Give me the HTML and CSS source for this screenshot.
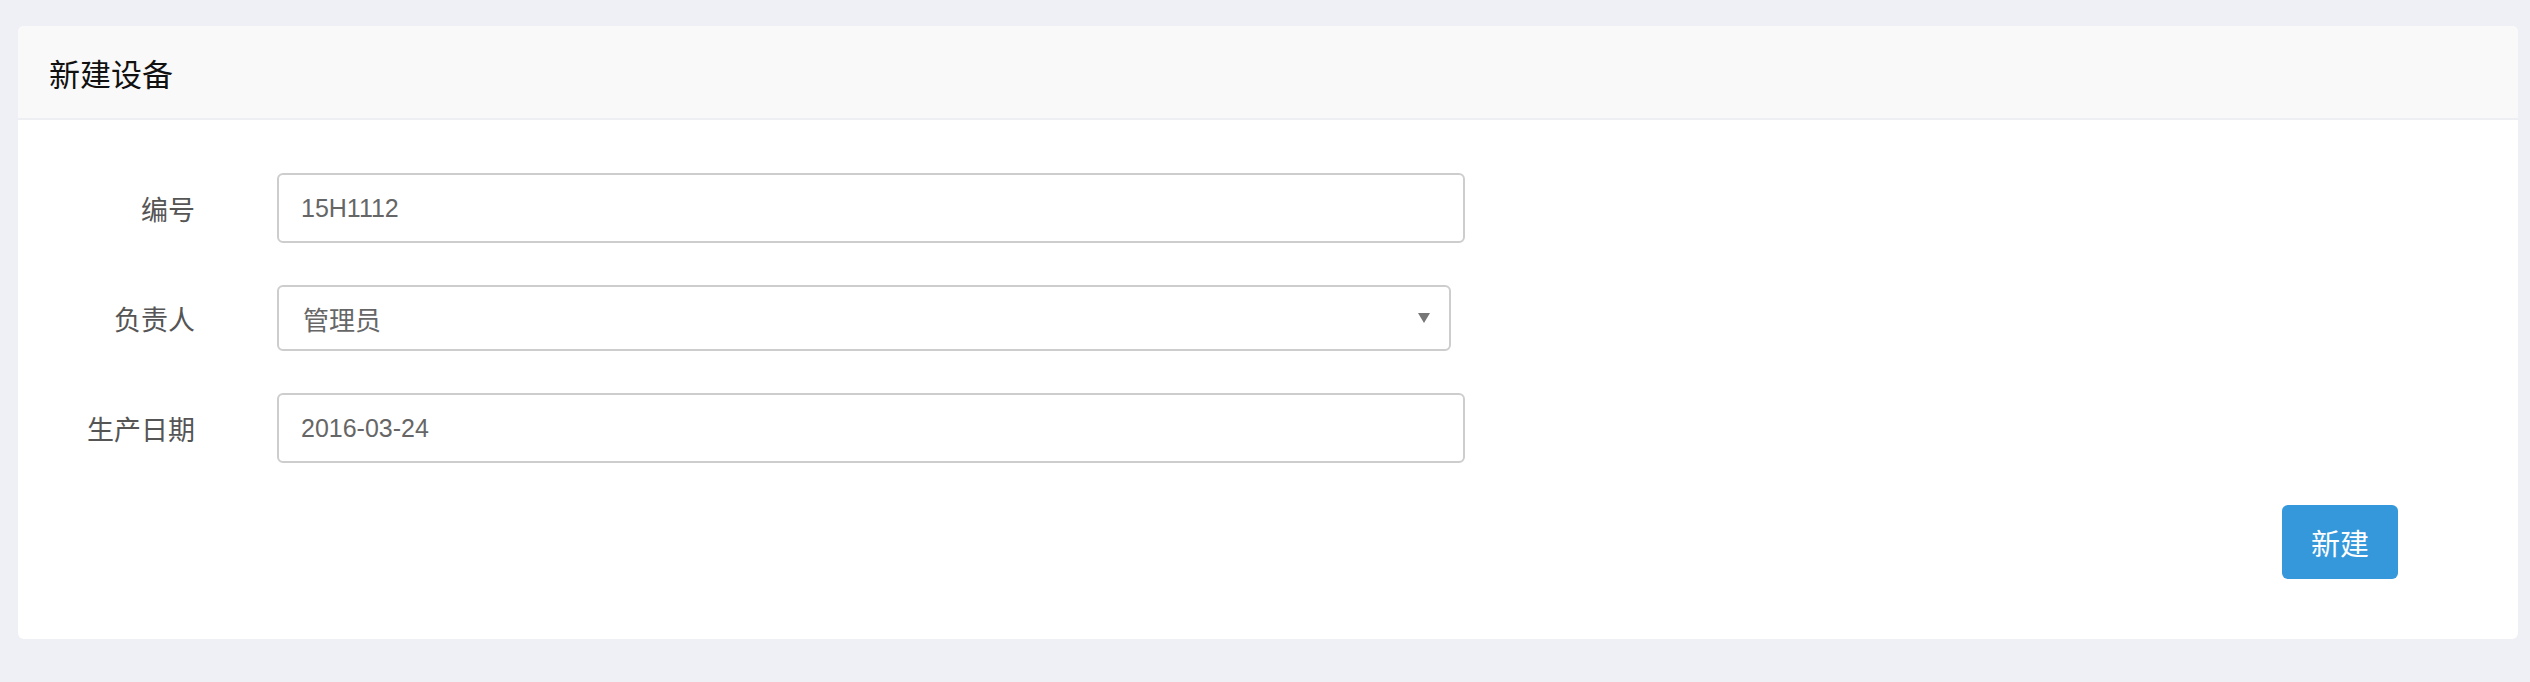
FILE: index.html
```html
<!DOCTYPE html>
<html lang="zh-CN">
<head>
<meta charset="utf-8">
<title>新建设备</title>
<link rel="stylesheet" href="styles.css">
</head>
<body>
<div class="card">
  <div class="card-header">新建设备</div>
  <form class="card-body">
    <div class="row">
      <label class="label">编号</label>
      <input class="control control-wide" type="text" value="15H1112">
    </div>
    <div class="row">
      <label class="label">负责人</label>
      <div class="select-wrap">
        <select class="control control-select">
          <option>管理员</option>
        </select>
        <svg class="arrow" width="12" height="10" viewBox="0 0 12 10"><path d="M0 0H12L6 10Z" fill="#777"/></svg>
      </div>
    </div>
    <div class="row">
      <label class="label">生产日期</label>
      <input class="control control-wide" type="text" value="2016-03-24">
    </div>
    <div class="actions">
      <button type="button" class="btn">新建</button>
    </div>
  </form>
</div>
</body>
</html>
```
FILE: styles.css
```css
html, body {
  margin: 0;
  padding: 0;
}
body {
  background: #eff0f5;
  font-family: "Liberation Sans", "Noto Sans CJK SC", sans-serif;
  height: 682px;
  overflow: hidden;
}
.card {
  margin: 26px 12px 0 18px;
  background: #fff;
  border-radius: 6px;
  overflow: hidden;
}
.card-header {
  height: 92px;
  border-bottom: 2px solid #eeeff2;
  background: #f9f9fa;
  padding-left: 31px;
  display: flex;
  align-items: center;
  font-family: "Noto Sans CJK SC", sans-serif;
  font-size: 31px;
  font-weight: 400;
  color: #111;
}
.card-body {
  padding: 53px 0 60px;
  margin: 0;
  display: flex;
  flex-direction: column;
  gap: 42px;
}
.row {
  display: flex;
  align-items: center;
}
.label {
  width: 177px;
  margin-right: 82px;
  text-align: right;
  font-family: "Noto Sans CJK SC", sans-serif;
  font-size: 27px;
  color: #555;
}
.control {
  box-sizing: border-box;
  border: 2px solid #cdcdcd;
  border-radius: 6px;
  background: #fff;
  color: #666;
  font-size: 25px;
  font-family: "Liberation Sans", "Noto Sans CJK SC", sans-serif;
  padding: 0 22px;
  margin: 0;
  outline: none;
}
.control-wide {
  width: 1188px;
  height: 70px;
}
.select-wrap {
  position: relative;
  width: 1174px;
  height: 66px;
}
.control-select {
  width: 100%;
  height: 66px;
  appearance: none;
  -webkit-appearance: none;
  font-family: "Noto Sans CJK SC", sans-serif;
  font-size: 26px;
  padding-left: 24px;
}
.arrow {
  position: absolute;
  right: 21px;
  top: 28px;
  pointer-events: none;
}
.actions {
  display: flex;
  justify-content: flex-end;
  padding-right: 120px;
  margin-top: 0;
}
.btn {
  width: 116px;
  height: 74px;
  border: none;
  border-radius: 6px;
  background: #3598db;
  color: #fff;
  font-family: "Noto Sans CJK SC", sans-serif;
  font-size: 29px;
  padding: 0;
}
```
